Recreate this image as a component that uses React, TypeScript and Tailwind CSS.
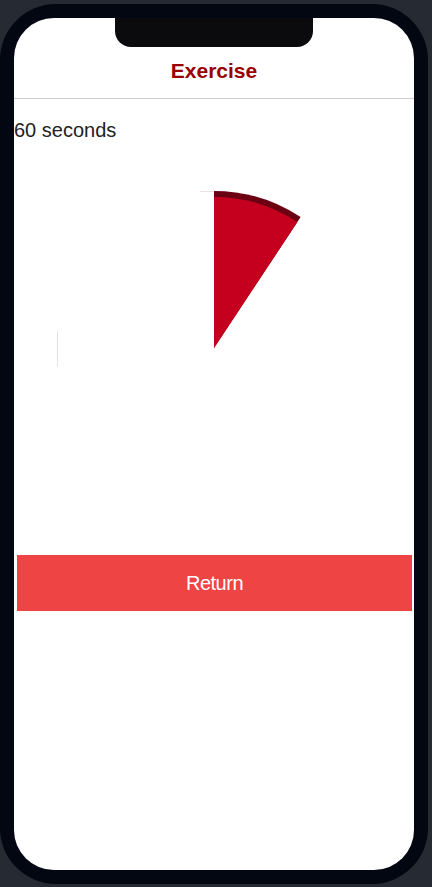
import React from "react";

export default function App() {
  const r = 157;
  const a = (33.5 * Math.PI) / 180;
  const ex = 157 + r * Math.sin(a);
  const ey = 157 - r * Math.cos(a);
  const ri = 151;
  const ix = 157 + ri * Math.sin(a);
  const iy = 157 - ri * Math.cos(a);
  return (
    <div className="w-[432px] h-[887px] bg-[#262a33] overflow-hidden" style={{ fontFamily: '"Liberation Sans", Arial, sans-serif' }}>
      <div className="mt-[4px] w-[428px] h-[880px] rounded-[56px] bg-[#030712] p-[14px]">
        <div className="relative h-full w-full rounded-[40px] bg-white overflow-hidden flex flex-col">
          <div className="absolute top-0 left-[101px] w-[198px] h-[29px] rounded-b-[16px] bg-[#0b0b0e]" />
          <div className="h-[81px] border-b border-[#cccccc] flex justify-center pt-[41px] shrink-0">
            <span className="text-[21px] leading-[24px] font-bold text-[#990000]">Exercise</span>
          </div>
          <p className="mt-[16px] text-[20px] leading-[30px] text-[#222222]">60 seconds</p>
          <div className="mt-[46px] flex justify-center">
            <svg width="314" height="314" viewBox="0 0 314 314">
              <path d={`M157 157 L157 0 A${r} ${r} 0 0 1 ${ex} ${ey} Z`} fill="#6b0012" />
              <path d={`M157 157 L157 6 A${ri} ${ri} 0 0 1 ${ix} ${iy} Z`} fill="#c4001e" />
              <line x1="0.5" y1="140" x2="0.5" y2="175" stroke="#8b4a55" strokeOpacity="0.18" strokeWidth="1" />
              <line x1="143" y1="0.5" x2="157" y2="0.5" stroke="#8b4a55" strokeOpacity="0.15" strokeWidth="1" />
            </svg>
          </div>
          <button className="mt-[50px] ml-[3px] mr-[2px] h-[56px] bg-[#ef4444] text-white text-[20px] tracking-[-0.5px] flex items-center justify-center">
            Return
          </button>
        </div>
      </div>
    </div>
  );
}
